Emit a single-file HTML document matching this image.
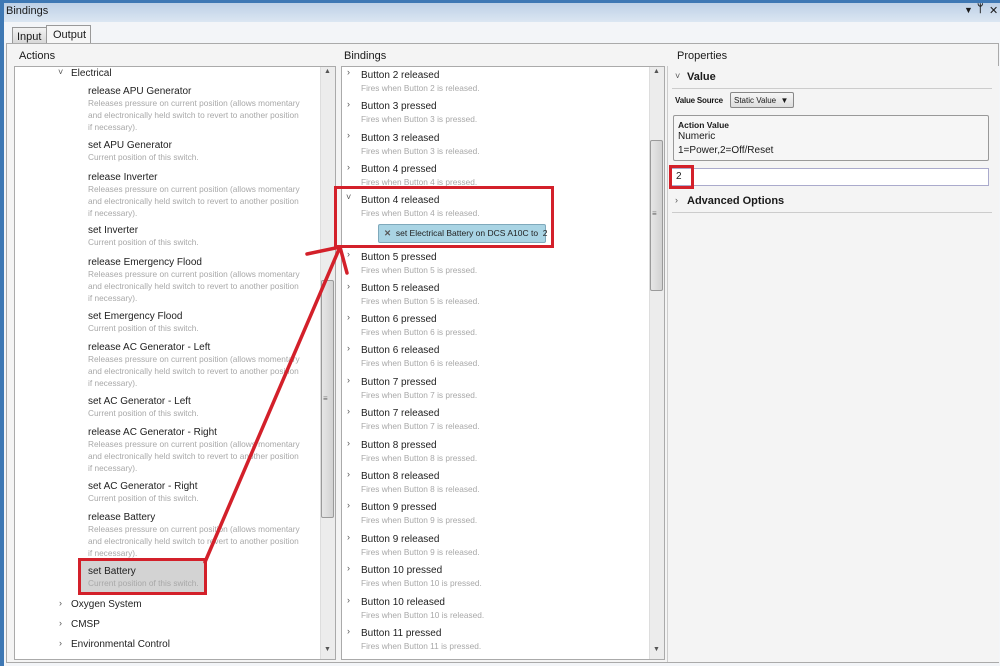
<!DOCTYPE html>
<html><head><meta charset="utf-8"><style>
*{margin:0;padding:0;box-sizing:border-box}
body{width:1000px;height:666px;overflow:hidden;background:#f0f0f0;font-family:"Liberation Sans",sans-serif;position:relative;color:#1a1a1a}
.a{position:absolute;white-space:nowrap}
.t{font-size:10px;color:#1e1e1e}
.d{font-size:8.3px;color:#a8a8a8;line-height:12px}
.c{font-size:9px;color:#555}
.sb{position:absolute;background:#ececec;border-left:1px solid #ddd}
.th{position:absolute;background:linear-gradient(90deg,#e6e6e6,#d2d2d2);border:1px solid #9a9a9a;border-radius:2px}
</style></head><body>
<div class="a" style="left:0;top:0;width:1000px;height:22px;background:linear-gradient(#b9cde4,#dbe6f2)"></div>
<div class="a" style="left:0;top:0;width:1000px;height:3px;background:#3e78b4"></div>
<div class="a" style="left:0;top:0;width:4px;height:666px;background:#3e78b4"></div>
<div class="a" style="left:6px;top:5px;font-size:11px">Bindings</div>
<div class="a" style="left:964px;top:5px;font-size:9px">&#9660;</div>
<div class="a" style="left:977px;top:3px;font-size:11px;font-weight:bold">ᛘ</div>
<div class="a" style="left:989px;top:4px;font-size:11px">✕</div>
<div class="a" style="left:4px;top:22px;width:996px;height:644px;background:#f3f5f8"></div>
<div class="a" style="left:12px;top:27px;width:35px;height:17px;background:linear-gradient(#f2f2f2,#d8d8d8);border:1px solid #999;font-size:11px;padding:3px 0 0 4px">Input</div>
<div class="a" style="left:46px;top:25px;width:45px;height:19px;background:#f6f6f6;border:1px solid #999;border-bottom:none;font-size:11px;padding:3px 0 0 6px">Output</div>
<div class="a" style="left:6px;top:43px;width:993px;height:620px;border:1px solid #aaa;background:#f4f4f4"></div>
<div class="a" style="left:19px;top:50px;font-size:11px">Actions</div>
<div class="a" style="left:344px;top:50px;font-size:11px">Bindings</div>
<div class="a" style="left:677px;top:50px;font-size:11px">Properties</div>

<!-- actions -->
<div class="a" style="left:14px;top:66px;width:322px;height:594px;background:#fff;border:1px solid #aaa"></div>
<div class="sb" style="left:320px;top:67px;width:15px;height:592px"></div>
<div class="th" style="left:321px;top:280px;width:13px;height:238px"></div>
<div class="a c" style="left:324px;top:68px;font-size:7px">▲</div>
<div class="a c" style="left:324px;top:646px;font-size:7px">▼</div>
<div class="a" style="left:323px;top:394px;font-size:8px;color:#666">≡</div>
<div class="a c" style="left:58px;top:67px">˅</div><div class="a t" style="left:71px;top:68px">Electrical</div>
<div class="a" style="left:80px;top:561px;width:124px;height:31px;background:#d3d3d3"></div>

<div class="a t" style="left:88px;top:86px">release APU Generator</div>
<div class="a d" style="left:88px;top:97px">Releases pressure on current position (allows momentary<br>and electronically held switch to revert to another position<br>if necessary).</div>
<div class="a t" style="left:88px;top:140px">set APU Generator</div><div class="a d" style="left:88px;top:151px">Current position of this switch.</div>
<div class="a t" style="left:88px;top:172px">release Inverter</div>
<div class="a d" style="left:88px;top:183px">Releases pressure on current position (allows momentary<br>and electronically held switch to revert to another position<br>if necessary).</div>
<div class="a t" style="left:88px;top:225px">set Inverter</div><div class="a d" style="left:88px;top:236px">Current position of this switch.</div>
<div class="a t" style="left:88px;top:257px">release Emergency Flood</div>
<div class="a d" style="left:88px;top:268px">Releases pressure on current position (allows momentary<br>and electronically held switch to revert to another position<br>if necessary).</div>
<div class="a t" style="left:88px;top:311px">set Emergency Flood</div><div class="a d" style="left:88px;top:322px">Current position of this switch.</div>
<div class="a t" style="left:88px;top:342px">release AC Generator - Left</div>
<div class="a d" style="left:88px;top:353px">Releases pressure on current position (allows momentary<br>and electronically held switch to revert to another position<br>if necessary).</div>
<div class="a t" style="left:88px;top:396px">set AC Generator - Left</div><div class="a d" style="left:88px;top:407px">Current position of this switch.</div>
<div class="a t" style="left:88px;top:427px">release AC Generator - Right</div>
<div class="a d" style="left:88px;top:438px">Releases pressure on current position (allows momentary<br>and electronically held switch to revert to another position<br>if necessary).</div>
<div class="a t" style="left:88px;top:481px">set AC Generator - Right</div><div class="a d" style="left:88px;top:492px">Current position of this switch.</div>
<div class="a t" style="left:88px;top:512px">release Battery</div>
<div class="a d" style="left:88px;top:523px">Releases pressure on current position (allows momentary<br>and electronically held switch to revert to another position<br>if necessary).</div>
<div class="a t" style="left:88px;top:566px">set Battery</div><div class="a d" style="left:88px;top:577px">Current position of this switch.</div>
<div class="a c" style="left:59px;top:598px">›</div><div class="a t" style="left:71px;top:599px">Oxygen System</div>
<div class="a c" style="left:59px;top:618px">›</div><div class="a t" style="left:71px;top:619px">CMSP</div>
<div class="a c" style="left:59px;top:638px">›</div><div class="a t" style="left:71px;top:639px">Environmental Control</div>

<!-- bindings -->
<div class="a" style="left:341px;top:66px;width:324px;height:594px;background:#fff;border:1px solid #aaa"></div>
<div class="sb" style="left:649px;top:67px;width:15px;height:592px"></div>
<div class="th" style="left:650px;top:140px;width:13px;height:151px"></div>
<div class="a c" style="left:653px;top:68px;font-size:7px">▲</div>
<div class="a c" style="left:653px;top:646px;font-size:7px">▼</div>
<div class="a" style="left:652px;top:209px;font-size:8px;color:#666">≡</div>

<div class="a c" style="left:347px;top:67px">›</div><div class="a t" style="left:361px;top:70px">Button 2 released</div><div class="a d" style="left:361px;top:82px">Fires when Button 2 is released.</div>
<div class="a c" style="left:347px;top:99px">›</div><div class="a t" style="left:361px;top:101px">Button 3 pressed</div><div class="a d" style="left:361px;top:113px">Fires when Button 3 is pressed.</div>
<div class="a c" style="left:347px;top:130px">›</div><div class="a t" style="left:361px;top:133px">Button 3 released</div><div class="a d" style="left:361px;top:145px">Fires when Button 3 is released.</div>
<div class="a c" style="left:347px;top:162px">›</div><div class="a t" style="left:361px;top:164px">Button 4 pressed</div><div class="a d" style="left:361px;top:176px">Fires when Button 4 is pressed.</div>
<div class="a c" style="left:346px;top:192px">˅</div><div class="a t" style="left:361px;top:195px">Button 4 released</div><div class="a d" style="left:361px;top:207px">Fires when Button 4 is released.</div>
<div class="a" style="left:378px;top:224px;width:168px;height:19px;background:#a9d4e4;border:1px solid #7fa9bb;border-radius:2px;font-size:8.5px;padding:3px 0 0 5px;color:#222"><b style="color:#555">✕</b>&nbsp; set Electrical Battery on DCS A10C to &nbsp;2</div>
<div class="a c" style="left:347px;top:249px">›</div><div class="a t" style="left:361px;top:252px">Button 5 pressed</div><div class="a d" style="left:361px;top:264px">Fires when Button 5 is pressed.</div>
<div class="a c" style="left:347px;top:281px">›</div><div class="a t" style="left:361px;top:283px">Button 5 released</div><div class="a d" style="left:361px;top:295px">Fires when Button 5 is released.</div>
<div class="a c" style="left:347px;top:312px">›</div><div class="a t" style="left:361px;top:314px">Button 6 pressed</div><div class="a d" style="left:361px;top:326px">Fires when Button 6 is pressed.</div>
<div class="a c" style="left:347px;top:343px">›</div><div class="a t" style="left:361px;top:345px">Button 6 released</div><div class="a d" style="left:361px;top:357px">Fires when Button 6 is released.</div>
<div class="a c" style="left:347px;top:375px">›</div><div class="a t" style="left:361px;top:377px">Button 7 pressed</div><div class="a d" style="left:361px;top:389px">Fires when Button 7 is pressed.</div>
<div class="a c" style="left:347px;top:406px">›</div><div class="a t" style="left:361px;top:408px">Button 7 released</div><div class="a d" style="left:361px;top:420px">Fires when Button 7 is released.</div>
<div class="a c" style="left:347px;top:438px">›</div><div class="a t" style="left:361px;top:440px">Button 8 pressed</div><div class="a d" style="left:361px;top:452px">Fires when Button 8 is pressed.</div>
<div class="a c" style="left:347px;top:469px">›</div><div class="a t" style="left:361px;top:471px">Button 8 released</div><div class="a d" style="left:361px;top:483px">Fires when Button 8 is released.</div>
<div class="a c" style="left:347px;top:500px">›</div><div class="a t" style="left:361px;top:502px">Button 9 pressed</div><div class="a d" style="left:361px;top:514px">Fires when Button 9 is pressed.</div>
<div class="a c" style="left:347px;top:532px">›</div><div class="a t" style="left:361px;top:534px">Button 9 released</div><div class="a d" style="left:361px;top:546px">Fires when Button 9 is released.</div>
<div class="a c" style="left:347px;top:563px">›</div><div class="a t" style="left:361px;top:565px">Button 10 pressed</div><div class="a d" style="left:361px;top:577px">Fires when Button 10 is pressed.</div>
<div class="a c" style="left:347px;top:595px">›</div><div class="a t" style="left:361px;top:597px">Button 10 released</div><div class="a d" style="left:361px;top:609px">Fires when Button 10 is released.</div>
<div class="a c" style="left:347px;top:626px">›</div><div class="a t" style="left:361px;top:628px">Button 11 pressed</div><div class="a d" style="left:361px;top:640px">Fires when Button 11 is pressed.</div>

<!-- properties -->
<div class="a" style="left:667px;top:66px;width:332px;height:596px;background:#f4f4f4;border-left:1px solid #ccc"></div>
<div class="a c" style="left:675px;top:71px">˅</div><div class="a" style="left:687px;top:71px;font-size:11px;font-weight:bold">Value</div>
<div class="a" style="left:672px;top:88px;width:320px;height:1px;background:#ccc"></div>
<div class="a" style="left:675px;top:96px;font-size:8px;font-weight:bold;letter-spacing:-0.2px">Value Source</div>
<div class="a" style="left:730px;top:92px;width:64px;height:16px;border:1px solid #888;border-radius:2px;background:linear-gradient(#f6f6f6,#ddd);font-size:8px;padding:3px 0 0 3px">Static Value &nbsp;▼</div>
<div class="a" style="left:673px;top:115px;width:316px;height:46px;border:1px solid #999;border-radius:2px;background:#f6f6f6"></div>
<div class="a" style="left:678px;top:120px;font-size:8.5px;font-weight:bold">Action Value</div>
<div class="a" style="left:678px;top:131px;font-size:10px">Numeric</div>
<div class="a" style="left:678px;top:145px;font-size:10px">1=Power,2=Off/Reset</div>
<div class="a" style="left:670px;top:168px;width:319px;height:18px;background:#fff;border:1px solid #aac"></div>
<div class="a" style="left:676px;top:171px;font-size:10px">2</div>
<div class="a" style="left:669px;top:165px;width:25px;height:24px;border:3px solid #d3202a"></div>
<div class="a c" style="left:675px;top:195px">›</div><div class="a" style="left:687px;top:195px;font-size:11px;font-weight:bold">Advanced Options</div>
<div class="a" style="left:672px;top:212px;width:320px;height:1px;background:#ccc"></div>

<!-- red highlights -->
<div class="a" style="left:334px;top:186px;width:220px;height:62px;border:3px solid #d3202a"></div>
<div class="a" style="left:78px;top:558px;width:129px;height:37px;border:3px solid #d3202a"></div>
<svg class="a" style="left:0;top:0" width="1000" height="666"><g stroke="#d3202a" stroke-width="3.5" fill="none" stroke-linecap="round"><path d="M205 562 L340 247"/><path d="M307 254 L340 247 L347 273"/></g></svg>
</body></html>
